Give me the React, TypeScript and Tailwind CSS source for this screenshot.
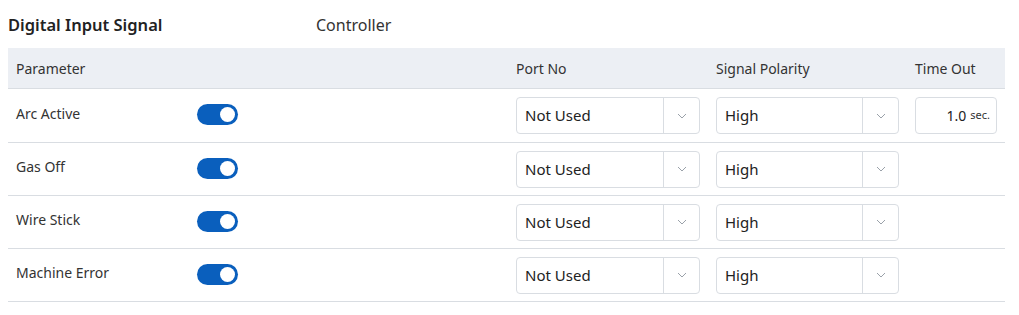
import React, { useState } from 'react';

const font = { fontFamily: '"Noto Sans", "Open Sans", sans-serif' };

const rows = [
  { name: 'Arc Active', timeout: true },
  { name: 'Gas Off', timeout: false },
  { name: 'Wire Stick', timeout: false },
  { name: 'Machine Error', timeout: false },
];

const Chevron = () => (
  <svg width="10" height="6" viewBox="0 0 10 6" fill="none">
    <path d="M1 1l4 4 4-4" stroke="#9aa1a9" strokeWidth="1" />
  </svg>
);

const Toggle = ({ on, onClick }: { on: boolean; onClick: () => void }) => (
  <button
    onClick={onClick}
    className={`w-[41px] h-[21px] rounded-full flex items-center px-[3px] -mt-[2px] ${on ? 'bg-[#0a5fbd] justify-end' : 'bg-[#c4c9cf] justify-start'}`}
  >
    <span className="w-[15px] h-[15px] rounded-full bg-white" />
  </button>
);

const SelectBox = ({ value, width }: { value: string; width: string }) => (
  <div className={`${width} h-[37px] flex border border-[#d9dde2] rounded-[4px] bg-white`}>
    <div className="flex-1 flex items-center pl-2 text-[15px] text-[#222]">{value}</div>
    <div className="w-[36px] flex items-center justify-center border-l border-[#d9dde2]">
      <Chevron />
    </div>
  </div>
);

export default function App() {
  const [toggles, setToggles] = useState([true, true, true, true]);

  return (
    <div className="w-[1019px] h-[315px] bg-white" style={font}>
      <div className="flex items-center h-[48px] pl-2 pt-[2px]">
        <div className="w-[308px] text-[16.5px] font-semibold text-[#222]">Digital Input Signal</div>
        <div className="text-[16px] text-[#333]">Controller</div>
      </div>
      <div className="ml-2 w-[997px]">
        <div className="flex items-center h-[41px] bg-[#eceff4] border-b border-[#d9dde2] text-[14px] text-[#333]">
          <div className="w-[500px] pl-2">Parameter</div>
          <div className="w-[200px] pl-2">Port No</div>
          <div className="w-[199px] pl-2">Signal Polarity</div>
          <div className="flex-1 pl-2">Time Out</div>
        </div>
        {rows.map((r, i) => (
          <div
            key={r.name}
            className={`flex items-center ${i === 0 ? 'h-[54px]' : 'h-[53px]'} border-b border-[#d9dde2] text-[14px] text-[#333]`}
          >
            <div className="w-[500px] pl-2 flex items-center">
              <div className="w-[181px] -mt-[5px]">{r.name}</div>
              <Toggle
                on={toggles[i]}
                onClick={() => setToggles(t => t.map((v, j) => (j === i ? !v : v)))}
              />
            </div>
            <div className="w-[200px] pl-2">
              <SelectBox value="Not Used" width="w-[184px]" />
            </div>
            <div className="w-[199px] pl-2">
              <SelectBox value="High" width="w-[183px]" />
            </div>
            <div className="flex-1 pl-2">
              {r.timeout && (
                <div className="w-[82px] h-[37px] border border-[#d9dde2] rounded-[4px] flex items-center justify-end pr-[6px] gap-[4px]">
                  <span className="text-[14px] text-[#222]">1.0</span>
                  <span className="text-[11px] text-[#333]">sec.</span>
                </div>
              )}
            </div>
          </div>
        ))}
      </div>
    </div>
  );
}
